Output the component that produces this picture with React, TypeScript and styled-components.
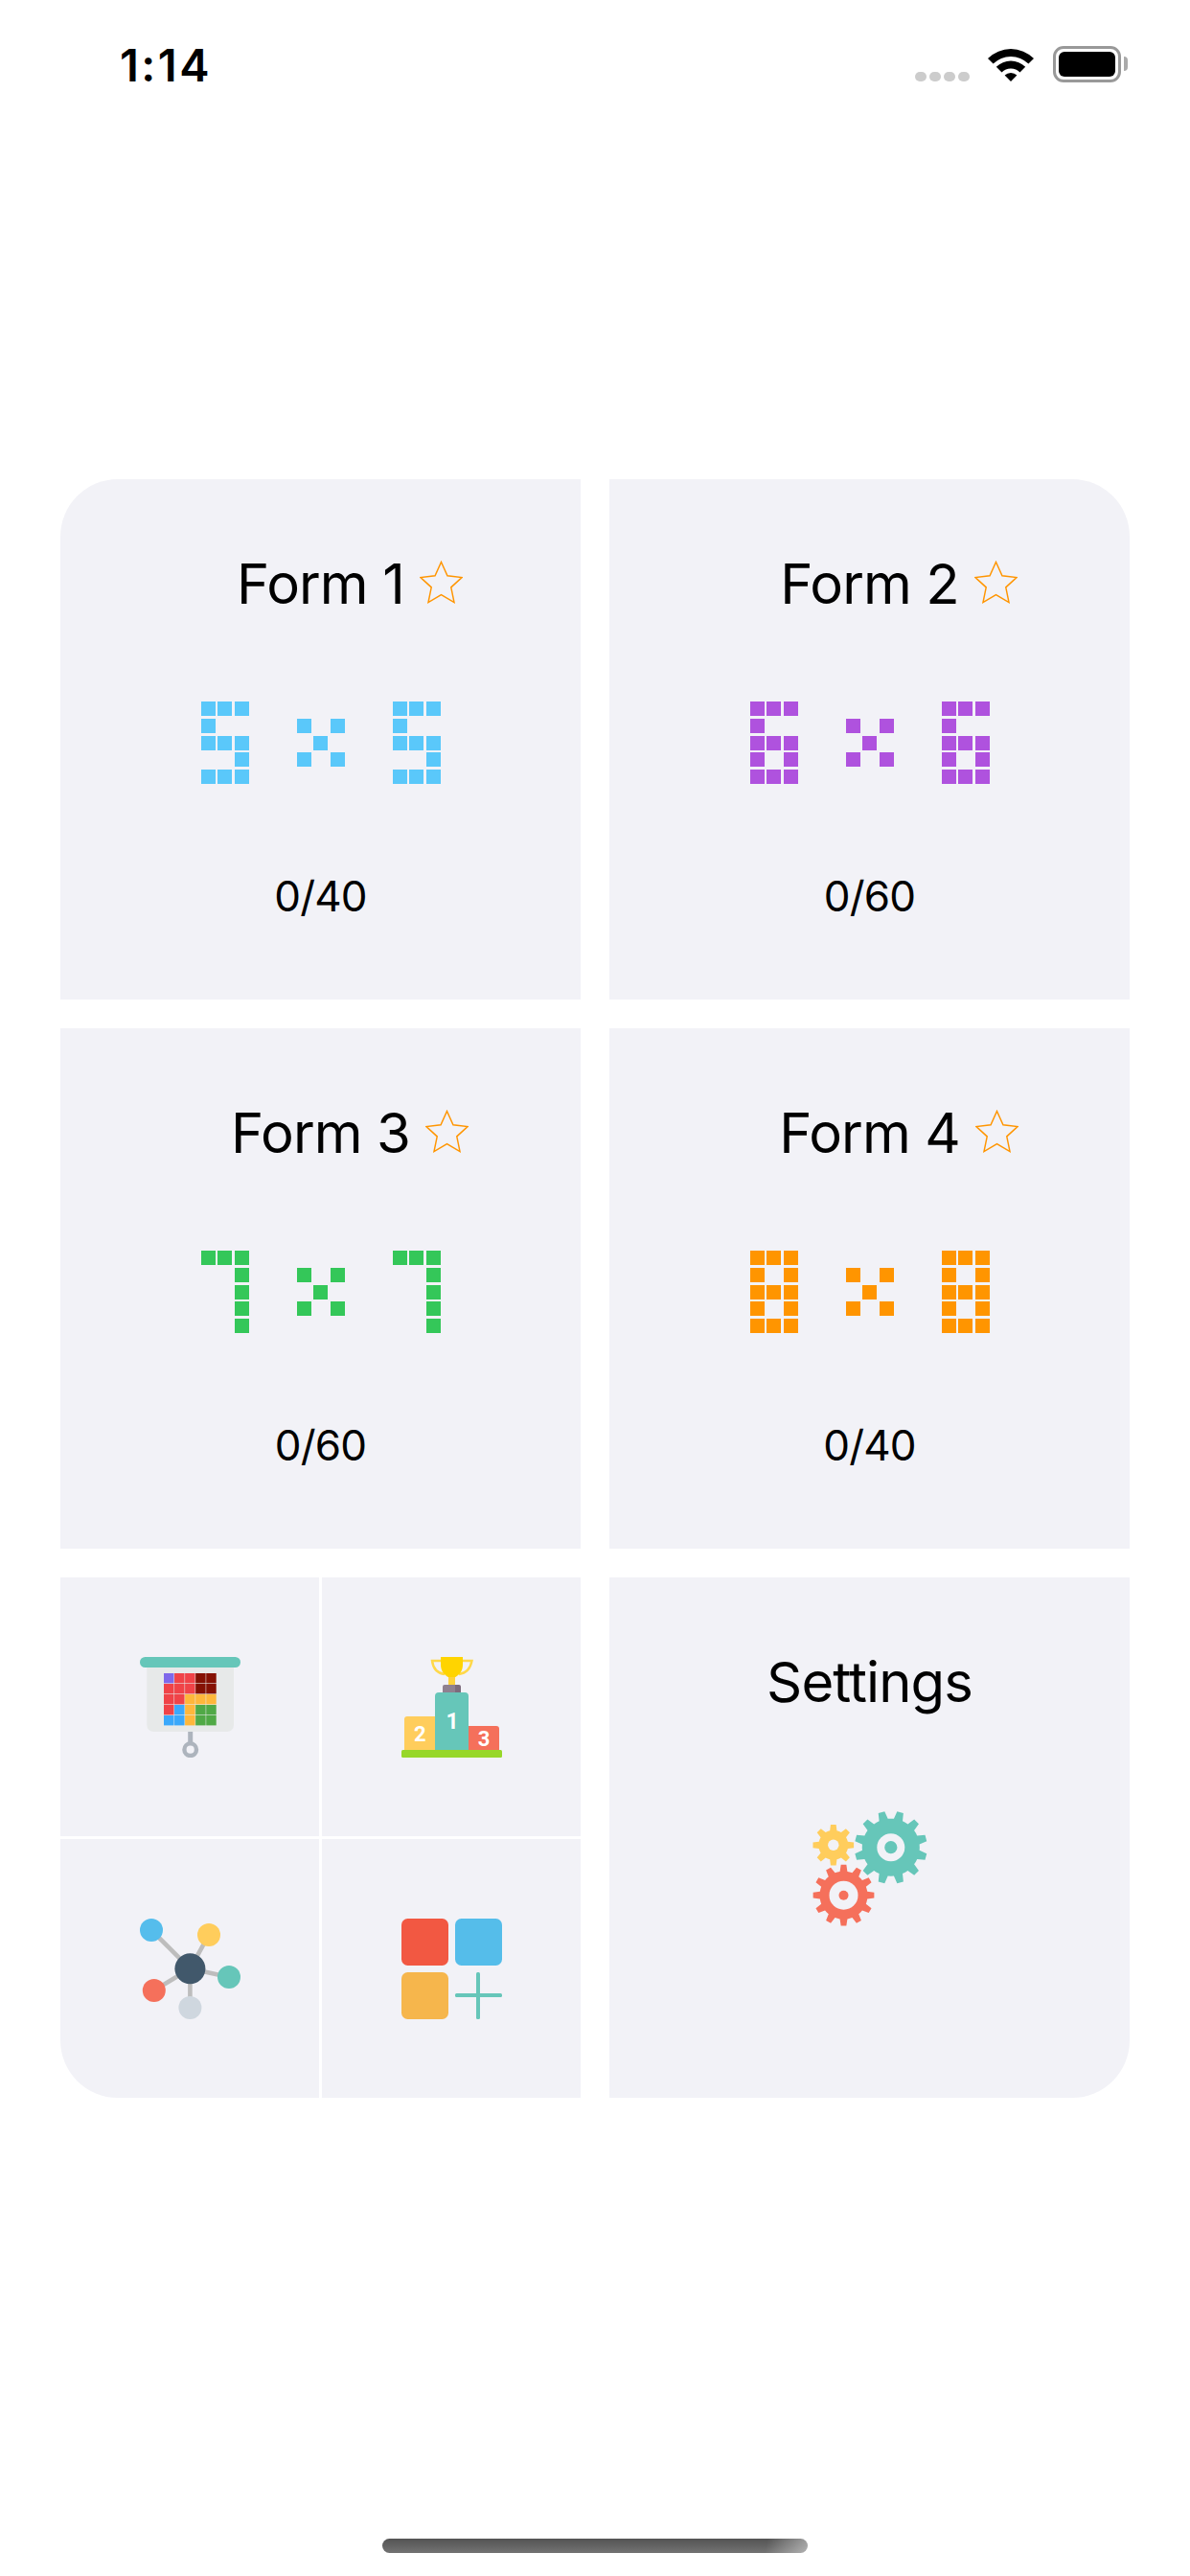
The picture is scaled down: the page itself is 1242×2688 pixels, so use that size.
import React from 'react';
import styled, { createGlobalStyle } from 'styled-components';

const CARD = '#f2f2f7';

const GlobalStyle = createGlobalStyle`
  html, body {
    margin: 0;
    background: #fff;
    font-family: Inter, "Liberation Sans", sans-serif;
    color: #000;
  }
`;

const Page = styled.div`
  width: 1242px;
  height: 2688px;
  display: flex;
  flex-direction: column;
  overflow: hidden;
`;

const StatusBar = styled.header`
  height: 120px;
  padding: 48px 65px 0 125px;
  box-sizing: border-box;
  display: flex;
  justify-content: space-between;
  align-items: flex-start;
`;

const Time = styled.span`
  font-size: 47px;
  font-weight: 600;
  line-height: 40px;
  letter-spacing: 2.5px;
`;

const StatusIcons = styled.div`
  display: flex;
  align-items: flex-start;
`;

const SignalDots = styled.div`
  display: flex;
  gap: 3px;
  margin: 27px 19px 0 0;
`;

const SignalDot = styled.span`
  width: 12px;
  height: 10px;
  border-radius: 5px;
  background: #ccc;
`;

const WifiIcon = styled.svg`
  width: 48px;
  height: 35px;
  margin: 2px 20px 0 0;
`;

const Battery = styled.div`
  width: 71px;
  height: 38px;
  box-sizing: border-box;
  border: 3px solid #999;
  border-radius: 11px;
  padding: 3px;
  position: relative;
  margin-right: 7px;

  &::after {
    content: '';
    position: absolute;
    top: 8px;
    right: -10px;
    width: 4px;
    height: 15px;
    background: #aaa;
    border-radius: 0 4px 4px 0;
  }
`;

const BatteryFill = styled.div`
  height: 100%;
  background: #000;
  border-radius: 6px;
`;

const Board = styled.main`
  margin: 380px 63px 0;
  display: grid;
  grid-template-columns: 543px 543px;
  grid-auto-rows: 543px;
  gap: 30px;
`;

const Card = styled.section<{ $corner?: string }>`
  background: ${CARD};
  display: flex;
  flex-direction: column;
  align-items: center;
  border-radius: ${(p) => p.$corner || '0'};
`;

const Title = styled.h2`
  position: relative;
  margin: 73px 0 0;
  height: 72px;
  font-size: 58px;
  font-weight: 400;
  line-height: 72px;
  letter-spacing: -0.9px;
`;

const Star = styled.svg`
  position: absolute;
  left: calc(100% + 16px);
  top: 12px;
  width: 45px;
  height: 45px;
`;

const PixelRow = styled.div`
  display: flex;
  gap: 50px;
  margin-top: 87px;
`;

const Glyph = styled.div`
  display: grid;
  grid-template-columns: repeat(3, 15px);
  grid-auto-rows: 15px;
  gap: 2.75px 2.5px;
`;

const Pixel = styled.span<{ $color: string; $on: boolean }>`
  background: ${(p) => (p.$on ? p.$color : 'transparent')};
`;

const Count = styled.p`
  margin: 90px 0 0;
  font-size: 44px;
  line-height: 54px;
  letter-spacing: -0.8px;
`;

const MenuGrid = styled.nav`
  display: grid;
  grid-template-columns: 270px 270px;
  grid-template-rows: 270px 270px;
  gap: 3px;
  overflow: hidden;
  border-bottom-left-radius: 60px;
`;

const MenuCell = styled.div`
  background: ${CARD};
  display: flex;
  align-items: center;
  justify-content: center;
`;

const MenuIcon = styled.svg`
  width: 105px;
  height: 105px;
  display: block;
`;

const GearIcon = styled.svg`
  width: 120px;
  height: 120px;
  margin-top: 99px;
`;

const HomeBar = styled.div`
  width: 444px;
  height: 15px;
  margin: auto auto 24px;
  border-radius: 8px;
  background:
    linear-gradient(100deg, transparent 90%, rgba(255, 255, 255, 0.45) 100%),
    linear-gradient(180deg, #535353, #737373);
`;

const GLYPHS: Record<string, string> = {
  '5': '111100111001111',
  '6': '111100111101111',
  '7': '111001001001001',
  '8': '111101111101111',
  x: '000101010101000',
};

const FORMS = [
  { title: 'Form 1', size: '5', color: '#5ac8fa', count: '0/40', corner: '60px 0 0 0' },
  { title: 'Form 2', size: '6', color: '#af52de', count: '0/60', corner: '0 60px 0 0' },
  { title: 'Form 3', size: '7', color: '#34c759', count: '0/60' },
  { title: 'Form 4', size: '8', color: '#ff9500', count: '0/40' },
];

const PixelGlyph = ({ name, color }: { name: string; color: string }) => (
  <Glyph>
    {GLYPHS[name].split('').map((bit, i) => (
      <Pixel key={i} $color={color} $on={bit === '1'} />
    ))}
  </Glyph>
);

const R = '#f04348';
const D = '#851104';
const O = '#feb73b';
const B = '#3aa8fb';
const G = '#50a946';
const TABLE = [
  ['#7f68ea', R, R, D, D],
  [R, R, R, D, D],
  [R, R, O, O, O],
  [R, B, O, G, G],
  [B, B, O, G, G],
];

const BoardIcon = () => (
  <MenuIcon viewBox="0 0 105 105">
    <path d="M7.3 11H98V71a7 7 0 0 1-7 7H14.3a7 7 0 0 1-7-7Z" fill="#e7e9e9" />
    <rect x="0" y="0" width="105" height="11" rx="5.5" fill="#66c6b9" />
    {TABLE.map((row, y) =>
      row.map((c, x) => (
        <rect key={`${x}-${y}`} x={25 + x * 11.05} y={17 + y * 11} width="10.5" height="10.4" fill={c} />
      )),
    )}
    <rect x="50.2" y="78" width="5" height="12" fill="#adb4bd" />
    <circle cx="52.7" cy="96.7" r="6.3" fill="none" stroke="#adb4bd" strokeWidth="4.4" />
  </MenuIcon>
);

const podiumNumber = { fill: '#fff', fontFamily: 'Roboto, sans-serif', fontWeight: 700, textAnchor: 'middle' } as const;

const PodiumIcon = () => (
  <MenuIcon viewBox="0 0 105 105">
    <path d="M41 4H32C33 12 38 17 45 18M64 4H73.5C72 12 67 17 60 18" fill="none" stroke="#ffd84a" strokeWidth="2.4" />
    <path d="M41 0H64V8C64 15 60 19 55.5 21.5H49.5C45 19 41 15 41 8Z" fill="#ffd400" />
    <rect x="49" y="21" width="7" height="8" fill="#ffd23c" />
    <path d="M45 29H56V37H43V31a2 2 0 0 1 2-2Z" fill="#8f8190" />
    <path d="M56 29H60a2 2 0 0 1 2 2V37H56Z" fill="#7c6b7c" />
    <path d="M6 62H35V97H3V65a3 3 0 0 1 3-3Z" fill="#ffcd5c" />
    <path d="M39 37H66a4 4 0 0 1 4 4V97H35V41a4 4 0 0 1 4-4Z" fill="#66c6b9" />
    <path d="M70 72H99a3 3 0 0 1 3 3V97H70Z" fill="#f5705b" />
    <rect x="0" y="97" width="105" height="8" rx="1.5" fill="#97d729" />
    <text x="53" y="75" fontSize="23" {...podiumNumber}>1</text>
    <text x="19.3" y="88" fontSize="22" {...podiumNumber}>2</text>
    <text x="86" y="93" fontSize="22" {...podiumNumber}>3</text>
  </MenuIcon>
);

const NODES = [
  { x: 12, y: 12, c: '#55bdec' },
  { x: 72, y: 17, c: '#ffcd5c' },
  { x: 93, y: 61, c: '#66c6b9' },
  { x: 14.8, y: 75, c: '#f5705b' },
  { x: 52.4, y: 93, c: '#cfd7df' },
];

const NetworkIcon = () => (
  <MenuIcon viewBox="0 0 105 105">
    {NODES.map((n) => (
      <line key={n.c} x1="52.4" y1="52.3" x2={n.x} y2={n.y} stroke="#bdbdbd" strokeWidth="4.6" />
    ))}
    {NODES.map((n) => (
      <circle key={n.c} cx={n.x} cy={n.y} r="12" fill={n.c} />
    ))}
    <circle cx="52.4" cy="52.3" r="16" fill="#41586b" />
  </MenuIcon>
);

const AddTileIcon = () => (
  <MenuIcon viewBox="0 0 105 105">
    <rect x="0" y="0" width="49" height="49" rx="6.5" fill="#f25842" />
    <rect x="56" y="0" width="49" height="49" rx="6.5" fill="#55bdea" />
    <rect x="0" y="56" width="49" height="49" rx="6.5" fill="#f6b64c" />
    <rect x="78" y="56" width="4" height="49" rx="1.5" fill="#66c6b9" />
    <rect x="56" y="78" width="49" height="4" rx="1.5" fill="#66c6b9" />
  </MenuIcon>
);

// trapezoid teeth round a circle, start is the angle of the first tooth
const gearPath = (cx: number, cy: number, outer: number, inner: number, teeth: number, start: number) => {
  const step = (Math.PI * 2) / teeth;
  const pt = (r: number, a: number) => `${(cx + r * Math.sin(a)).toFixed(2)} ${(cy - r * Math.cos(a)).toFixed(2)}`;
  let d = '';
  for (let i = 0; i < teeth; i++) {
    const a = start + i * step;
    d += `${i ? 'L' : 'M'}${pt(inner, a - step * 0.3)}L${pt(outer, a - step * 0.17)}L${pt(outer, a + step * 0.17)}L${pt(inner, a + step * 0.3)}`;
    d += `A${inner} ${inner} 0 0 1 ${pt(inner, a + step * 0.7)}`;
  }
  return d + 'Z';
};

const SettingsGears = () => (
  <GearIcon viewBox="0 0 120 120">
    <path d={gearPath(81.8, 37.7, 38, 30, 12, Math.PI / 12)} fill="#66c6b9" />
    <circle cx="81.8" cy="37.7" r="14.5" fill={CARD} />
    <circle cx="81.8" cy="37.7" r="6.6" fill="#66c6b9" />
    <path d={gearPath(21.8, 35.3, 21.5, 15.5, 8, 0)} fill="#ffcd5c" />
    <circle cx="21.8" cy="35.3" r="5.7" fill={CARD} />
    <path d={gearPath(32.5, 87.7, 32, 25, 12, 0)} fill="#f5705b" />
    <circle cx="32.5" cy="87.7" r="15" fill={CARD} />
    <circle cx="32.5" cy="87.7" r="5" fill="#f5705b" />
  </GearIcon>
);

const App: React.FC = () => {
  return (
    <Page>
      <GlobalStyle />
      <StatusBar>
        <Time>1:14</Time>
        <StatusIcons>
          <SignalDots>
            {[0, 1, 2, 3].map((i) => (
              <SignalDot key={i} />
            ))}
          </SignalDots>
          <WifiIcon viewBox="0 0 48 35">
            <path d="M0 11A34 34 0 0 1 48 11L42.4 16.6A26 26 0 0 0 5.6 16.6Z" />
            <path d="M8.8 19.8A21.5 21.5 0 0 1 39.2 19.8L33.5 25.5A13.5 13.5 0 0 0 14.5 25.5Z" />
            <path d="M17.6 28.6A9 9 0 0 1 30.4 28.6L24 35Z" />
          </WifiIcon>
          <Battery>
            <BatteryFill />
          </Battery>
        </StatusIcons>
      </StatusBar>
      <Board>
        {FORMS.map((form) => (
          <Card key={form.title} $corner={form.corner}>
            <Title>
              {form.title}
              <Star viewBox="0 0 46 45">
                <polygon
                  points="23,1 29.6,15.6 45,17.5 33.5,28 36.8,44 23,36 9.2,44 12.5,28 1,17.5 16.4,15.6"
                  fill="none"
                  stroke="#ff9500"
                  strokeWidth="1.5"
                />
              </Star>
            </Title>
            <PixelRow>
              <PixelGlyph name={form.size} color={form.color} />
              <PixelGlyph name="x" color={form.color} />
              <PixelGlyph name={form.size} color={form.color} />
            </PixelRow>
            <Count>{form.count}</Count>
          </Card>
        ))}
        <MenuGrid>
          <MenuCell><BoardIcon /></MenuCell>
          <MenuCell><PodiumIcon /></MenuCell>
          <MenuCell><NetworkIcon /></MenuCell>
          <MenuCell><AddTileIcon /></MenuCell>
        </MenuGrid>
        <Card $corner="0 0 60px 0">
          <Title>Settings</Title>
          <SettingsGears />
        </Card>
      </Board>
      <HomeBar />
    </Page>
  );
};

export default App;
